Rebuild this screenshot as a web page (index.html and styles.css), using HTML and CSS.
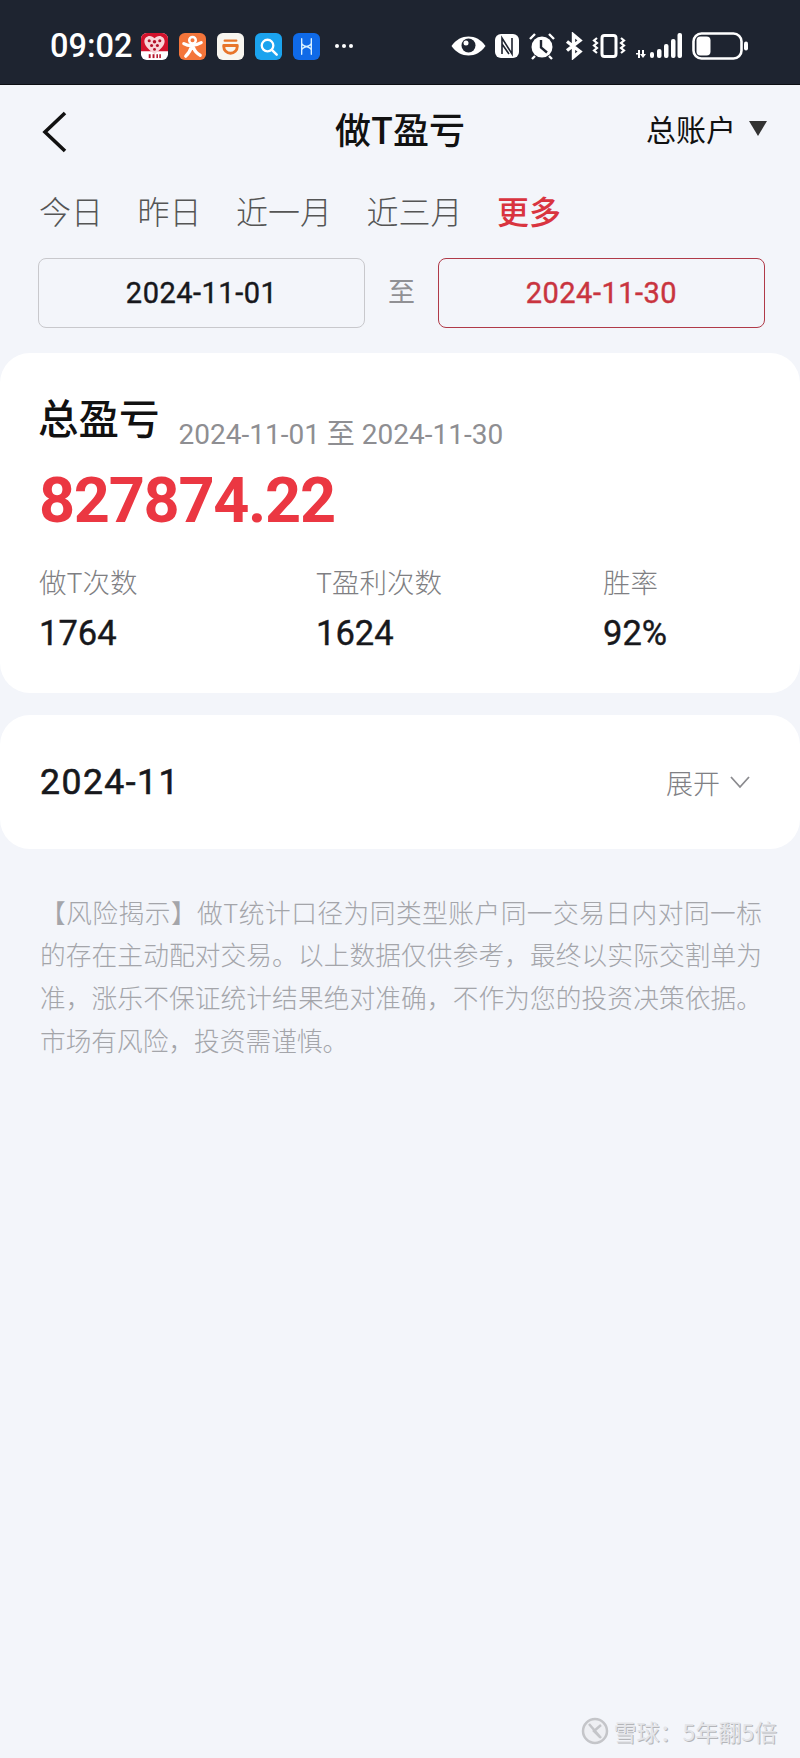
FILE: index.html
```html
<!DOCTYPE html>
<html lang="zh-CN">
<head>
  <meta charset="UTF-8" />
  <title>做T盈亏</title>
  <link rel="stylesheet" href="styles.css">
</head>
<body>

<div class="status-bar">
  <span class="clock">09:02</span>
  <div class="app-icons">
    <svg class="app" viewBox="0 0 28 28"><rect width="28" height="28" rx="6" fill="#fff"/><path d="M0 6a6 6 0 0 1 6-6h16a6 6 0 0 1 6 6v13H0z" fill="#d3122c"/><path d="M14 22C7 16 3.500 13 3.500 8.500c0-3 2.500-5.500 5.500-5.500 2 0 4 1 5 2.500C15 4 17 3 19 3c3 0 5.500 2.500 5.500 5.500 0 4.500-3.500 7.500-10.500 13.500z" fill="#f8d5d8"/><g fill="#b5142a"><circle cx="8.500" cy="8" r="1.600"/><circle cx="14" cy="9" r="1.800"/><circle cx="19.500" cy="8" r="1.600"/><circle cx="11" cy="13" r="1.600"/><circle cx="17" cy="13" r="1.600"/><circle cx="14" cy="17" r="1.500"/><rect x="8" y="22" width="2" height="4"/><rect x="12" y="22" width="2" height="4"/><rect x="16" y="22" width="1.600" height="4"/><rect x="19" y="22" width="1.600" height="4"/></g></svg>
    <svg class="app" viewBox="0 0 28 28"><rect width="28" height="28" rx="6" fill="#f4753a"/><circle cx="14" cy="7.500" r="3.400" fill="none" stroke="#fff" stroke-width="2.600"/><path d="M5 11c5 3 11 3 18-1M13 14c-1 4-3 7-6 10M15 15c1 3 3 6 7 8" fill="none" stroke="#fff" stroke-width="3.400" stroke-linecap="round"/></svg>
    <svg class="app" viewBox="0 0 28 28"><rect width="28" height="28" rx="6" fill="#f8f6f0"/><path d="M8 8h12" fill="none" stroke="#e8752a" stroke-width="2.400" stroke-linecap="round"/><path d="M7 13h14v1a7 7 0 0 1-14 0z" fill="none" stroke="#e8752a" stroke-width="3" stroke-linejoin="round"/></svg>
    <svg class="app" viewBox="0 0 28 28"><rect width="28" height="28" rx="6" fill="#1ba3ee"/><circle cx="13" cy="13" r="6" fill="none" stroke="#fff" stroke-width="2.400"/><path d="M18 18l4.500 4.500" stroke="#fff" stroke-width="2.600" stroke-linecap="round"/></svg>
    <svg class="app" viewBox="0 0 28 28"><rect width="28" height="28" rx="6" fill="#0f6ae8"/><path d="M9 6v16M19 6v16M9 10c0 5 10 3 10 8M19 10c0 5-10 3-10 8" fill="none" stroke="#d8f0ff" stroke-width="1.400" stroke-linecap="round"/></svg>
    <svg class="more-dots" viewBox="0 0 20 6"><circle cx="3" cy="3" r="2" fill="#fff"/><circle cx="10" cy="3" r="2" fill="#fff"/><circle cx="17" cy="3" r="2" fill="#fff"/></svg>
  </div>
  <div class="sys-icons">
    <svg width="35" height="24" viewBox="0 0 35 24"><path d="M0.500 12C5 5.500 11 2.500 17.500 2.500S30 5.500 34.500 12C30 18.500 24 21.500 17.500 21.500S5 18.500 0.500 12z" fill="#fff"/><circle cx="17.500" cy="11.500" r="7" fill="#1e2430"/><circle cx="15" cy="9" r="2.500" fill="#fff"/></svg>
    <svg width="24" height="26" viewBox="0 0 24 26"><rect y="1" width="24" height="24" rx="6" fill="#fff"/><path d="M7 21V5l10 16V5M7 11l7 10" fill="none" stroke="#1e2430" stroke-width="1.600"/></svg>
    <svg width="28" height="28" viewBox="0 0 28 28"><path d="M2 7l5-5M26 7l-5-5M7 24l-3 3M21 24l3 3" stroke="#fff" stroke-width="2.400"/><circle cx="14" cy="15" r="10.500" fill="#fff"/><path d="M13 8v7.500l6 5" fill="none" stroke="#1e2430" stroke-width="2.400"/></svg>
    <svg width="18" height="28" viewBox="0 0 18 28"><path d="M2 9.500l13 10-6.500 5.500V3L15 8.500 2 18.500" fill="none" stroke="#fff" stroke-width="3.400"/></svg>
    <svg width="34" height="28" viewBox="0 0 34 28"><rect x="10" y="3.500" width="14" height="21" rx="2.500" fill="none" stroke="#fff" stroke-width="3"/><path d="M5 6l-3 2.500L5 11l-3 2.500L5 16l-3 2.500L5 21M29 6l3 2.500L29 11l3 2.500L29 16l3 2.500L29 21" fill="none" stroke="#fff" stroke-width="2.200"/></svg>
    <svg width="48" height="28" viewBox="0 0 48 28"><g fill="#fff"><rect x="1" y="21" width="3" height="1.500"/><rect x="3" y="18" width="2" height="8"/><path d="M7 18h2v4h2l-3 4-3-4h2z"/><rect x="15" y="20" width="4" height="6" rx="2"/><rect x="22" y="17" width="4.500" height="9" rx="2"/><rect x="29" y="12" width="4.500" height="14" rx="2"/><rect x="36" y="7" width="4.500" height="19" rx="2"/><rect x="42.500" y="1" width="4.500" height="25" rx="2"/></g></svg>
    <svg width="56" height="28" viewBox="0 0 56 28"><rect x="1.500" y="1.500" width="48" height="25" rx="8" fill="none" stroke="#fff" stroke-width="2.600"/><rect x="4.500" y="4.500" width="14" height="19" rx="4" fill="#fff"/><rect x="52" y="9.500" width="4" height="9" rx="2" fill="#fff"/></svg>
  </div>
</div>

<div class="page">
  <div class="nav">
    <svg class="back" width="26" height="42" viewBox="0 0 26 42"><path d="M23 2L3 21l20 19" fill="none" stroke="#111" stroke-width="3.600"/></svg>
    <h1 class="nav-title">做T盈亏</h1>
    <div class="account">总账户<span class="account-arrow"></span></div>
  </div>

  <div class="tabs">
    <span>今日</span>
    <span>昨日</span>
    <span>近一月</span>
    <span>近三月</span>
    <span class="active">更多</span>
  </div>

  <div class="date-range">
    <div class="date-box">2024-11-01</div>
    <span class="date-sep">至</span>
    <div class="date-box selected">2024-11-30</div>
  </div>

  <div class="card summary">
    <div class="summary-head">
      <span class="summary-title">总盈亏</span>
      <span class="summary-range">2024-11-01 至 2024-11-30</span>
    </div>
    <div class="summary-total">827874.22</div>
    <div class="stats">
      <div class="stat stat-a"><div class="stat-label">做T次数</div><div class="stat-value">1764</div></div>
      <div class="stat stat-b"><div class="stat-label">T盈利次数</div><div class="stat-value">1624</div></div>
      <div class="stat"><div class="stat-label">胜率</div><div class="stat-value">92%</div></div>
    </div>
  </div>

  <div class="card month">
    <span class="month-name">2024-11</span>
    <span class="month-toggle">展开<svg width="20" height="14" viewBox="0 0 20 14"><path d="M1 2l9 10 9-10" fill="none" stroke="#8b8b8f" stroke-width="1.800"/></svg></span>
  </div>

  <p class="notice">【风险揭示】做T统计口径为同类型账户同一交易日内对同一标的存在主动配对交易。以上数据仅供参考，最终以实际交割单为准，涨乐不保证统计结果绝对准确，不作为您的投资决策依据。市场有风险，投资需谨慎。</p>
</div>

<div class="watermark">
  <svg width="28" height="28" viewBox="0 0 28 28"><circle cx="14" cy="14" r="12" fill="#eeeff3" stroke="#c4c5c9" stroke-width="2.500"/><path d="M8 7l12 14M20 8l-7 6 6 6" fill="none" stroke="#c4c5c9" stroke-width="2.500"/></svg>
  <span>雪球：5年翻5倍</span>
</div>

</body>
</html>
```

FILE: styles.css
```css
* {
  box-sizing: border-box;
}
body {
  margin: 0;
  width: 800px;
  height: 1758px;
  overflow: hidden;
  position: relative;
  background: #f3f5fa;
  font-family: "Noto Sans CJK SC", "DejaVu Sans", sans-serif;
  color: #111;
}
.status-bar {
  height: 85px;
  background: #1e2430;
  border-bottom: 1px solid #0c0e13;
  display: flex;
  align-items: center;
  padding: 8px 0 0 50px;
  color: #fff;
}
.clock {
  font-family: Roboto, sans-serif;
  font-size: 32.500px;
  font-weight: 500;
  width: 91px;
}
.app-icons {
  display: flex;
  align-items: center;
  gap: 11px;
  width: 310px;
}
.app {
  width: 27px;
  height: 27px;
}
.more-dots {
  width: 20px;
  height: 6px;
  margin-left: 3px;
}
.sys-icons {
  display: flex;
  align-items: center;
  gap: 9px;
}
.nav {
  height: 90px;
  display: flex;
  align-items: center;
  position: relative;
  padding: 0 33px 4px 42px;
  justify-content: space-between;
}
.back {
  margin-top: 8px;
}
.nav-title {
  position: absolute;
  left: 0;
  right: 0;
  margin: 0;
  text-align: center;
  font-size: 36px;
  font-weight: 500;
}
.account {
  display: flex;
  align-items: center;
  font-size: 30px;
  gap: 13px;
}
.account-arrow {
  width: 0;
  height: 0;
  border-left: 9px solid transparent;
  border-right: 9px solid transparent;
  border-top: 15px solid #333;
}
.tabs {
  display: flex;
  padding: 0 39px;
  gap: 34.500px;
  font-size: 32px;
  color: #555;
  height: 50px;
  align-items: center;
  font-weight: 300;
  margin-top: 10px;
}
.tabs .active {
  color: #d9343f;
  font-weight: 500;
}
.date-range {
  display: flex;
  align-items: center;
  padding: 0 35px 0 38px;
  margin-top: 23px;
}
.date-box {
  width: 328px;
  height: 70px;
  border: 1px solid #c8c8cc;
  border-radius: 8px;
  display: flex;
  align-items: center;
  justify-content: center;
  font-family: Roboto, sans-serif;
  font-size: 29px;
  letter-spacing: 0.500px;
  -webkit-text-stroke: 0.400px;
  color: #17181c;
}
.date-box.selected {
  border-color: #b03a48;
  color: #c9343f;
}
.date-sep {
  width: 73px;
  text-align: center;
  font-size: 27px;
  color: #909094;
  margin-top: -5px;
}
.card {
  background: #fff;
  border-radius: 30px;
}
.summary {
  height: 340px;
  margin-top: 25px;
  padding: 36px 39px 0;
}
.summary-head {
  display: flex;
  align-items: flex-end;
  gap: 19px;
}
.summary-title {
  font-size: 40.500px;
  font-weight: 500;
  line-height: 56px;
  margin-left: -1px;
}
.summary-range {
  font-family: Roboto, "Noto Sans CJK SC", sans-serif;
  font-size: 28px;
  line-height: 40px;
  color: #8e8e92;
  margin-bottom: -10px;
}
.summary-total {
  font-family: Roboto, sans-serif;
  font-weight: 700;
  font-size: 63px;
  letter-spacing: -1.300px;
  line-height: 70px;
  color: #eb3742;
  margin-top: 21px;
}
.stats {
  display: flex;
  margin-top: 25px;
}
.stat-a {
  width: 277px;
}
.stat-b {
  width: 287px;
}
.stat-label {
  font-size: 27.500px;
  color: #7f7f83;
  font-weight: 300;
  line-height: 40px;
}
.stat-value {
  font-family: Roboto, sans-serif;
  font-size: 34.500px;
  line-height: 42px;
  margin-top: 11px;
  -webkit-text-stroke: 0.400px;
  color: #17181c;
}
.month {
  height: 134px;
  margin-top: 22px;
  padding: 0 50px 0 40px;
  display: flex;
  align-items: center;
  justify-content: space-between;
}
.month-name {
  font-family: Roboto, sans-serif;
  font-size: 35.500px;
  letter-spacing: 1.500px;
  -webkit-text-stroke: 0.600px;
  color: #17181c;
}
.month-toggle {
  display: flex;
  align-items: center;
  gap: 10px;
  font-size: 27px;
  color: #808084;
  font-weight: 300;
}
.notice {
  margin: 0;
  padding: 41.500px 38px 0 40px;
  font-size: 25.700px;
  line-height: 42.700px;
  color: #a4a5aa;
  font-weight: 300;
  text-align: justify;
}
.watermark {
  position: absolute;
  right: 23px;
  bottom: 10px;
  display: flex;
  align-items: center;
  gap: 4px;
  font-size: 23px;
  color: #e4e5e9;
  text-shadow: 1px 1px 0 #b4b5b9;
}
```
